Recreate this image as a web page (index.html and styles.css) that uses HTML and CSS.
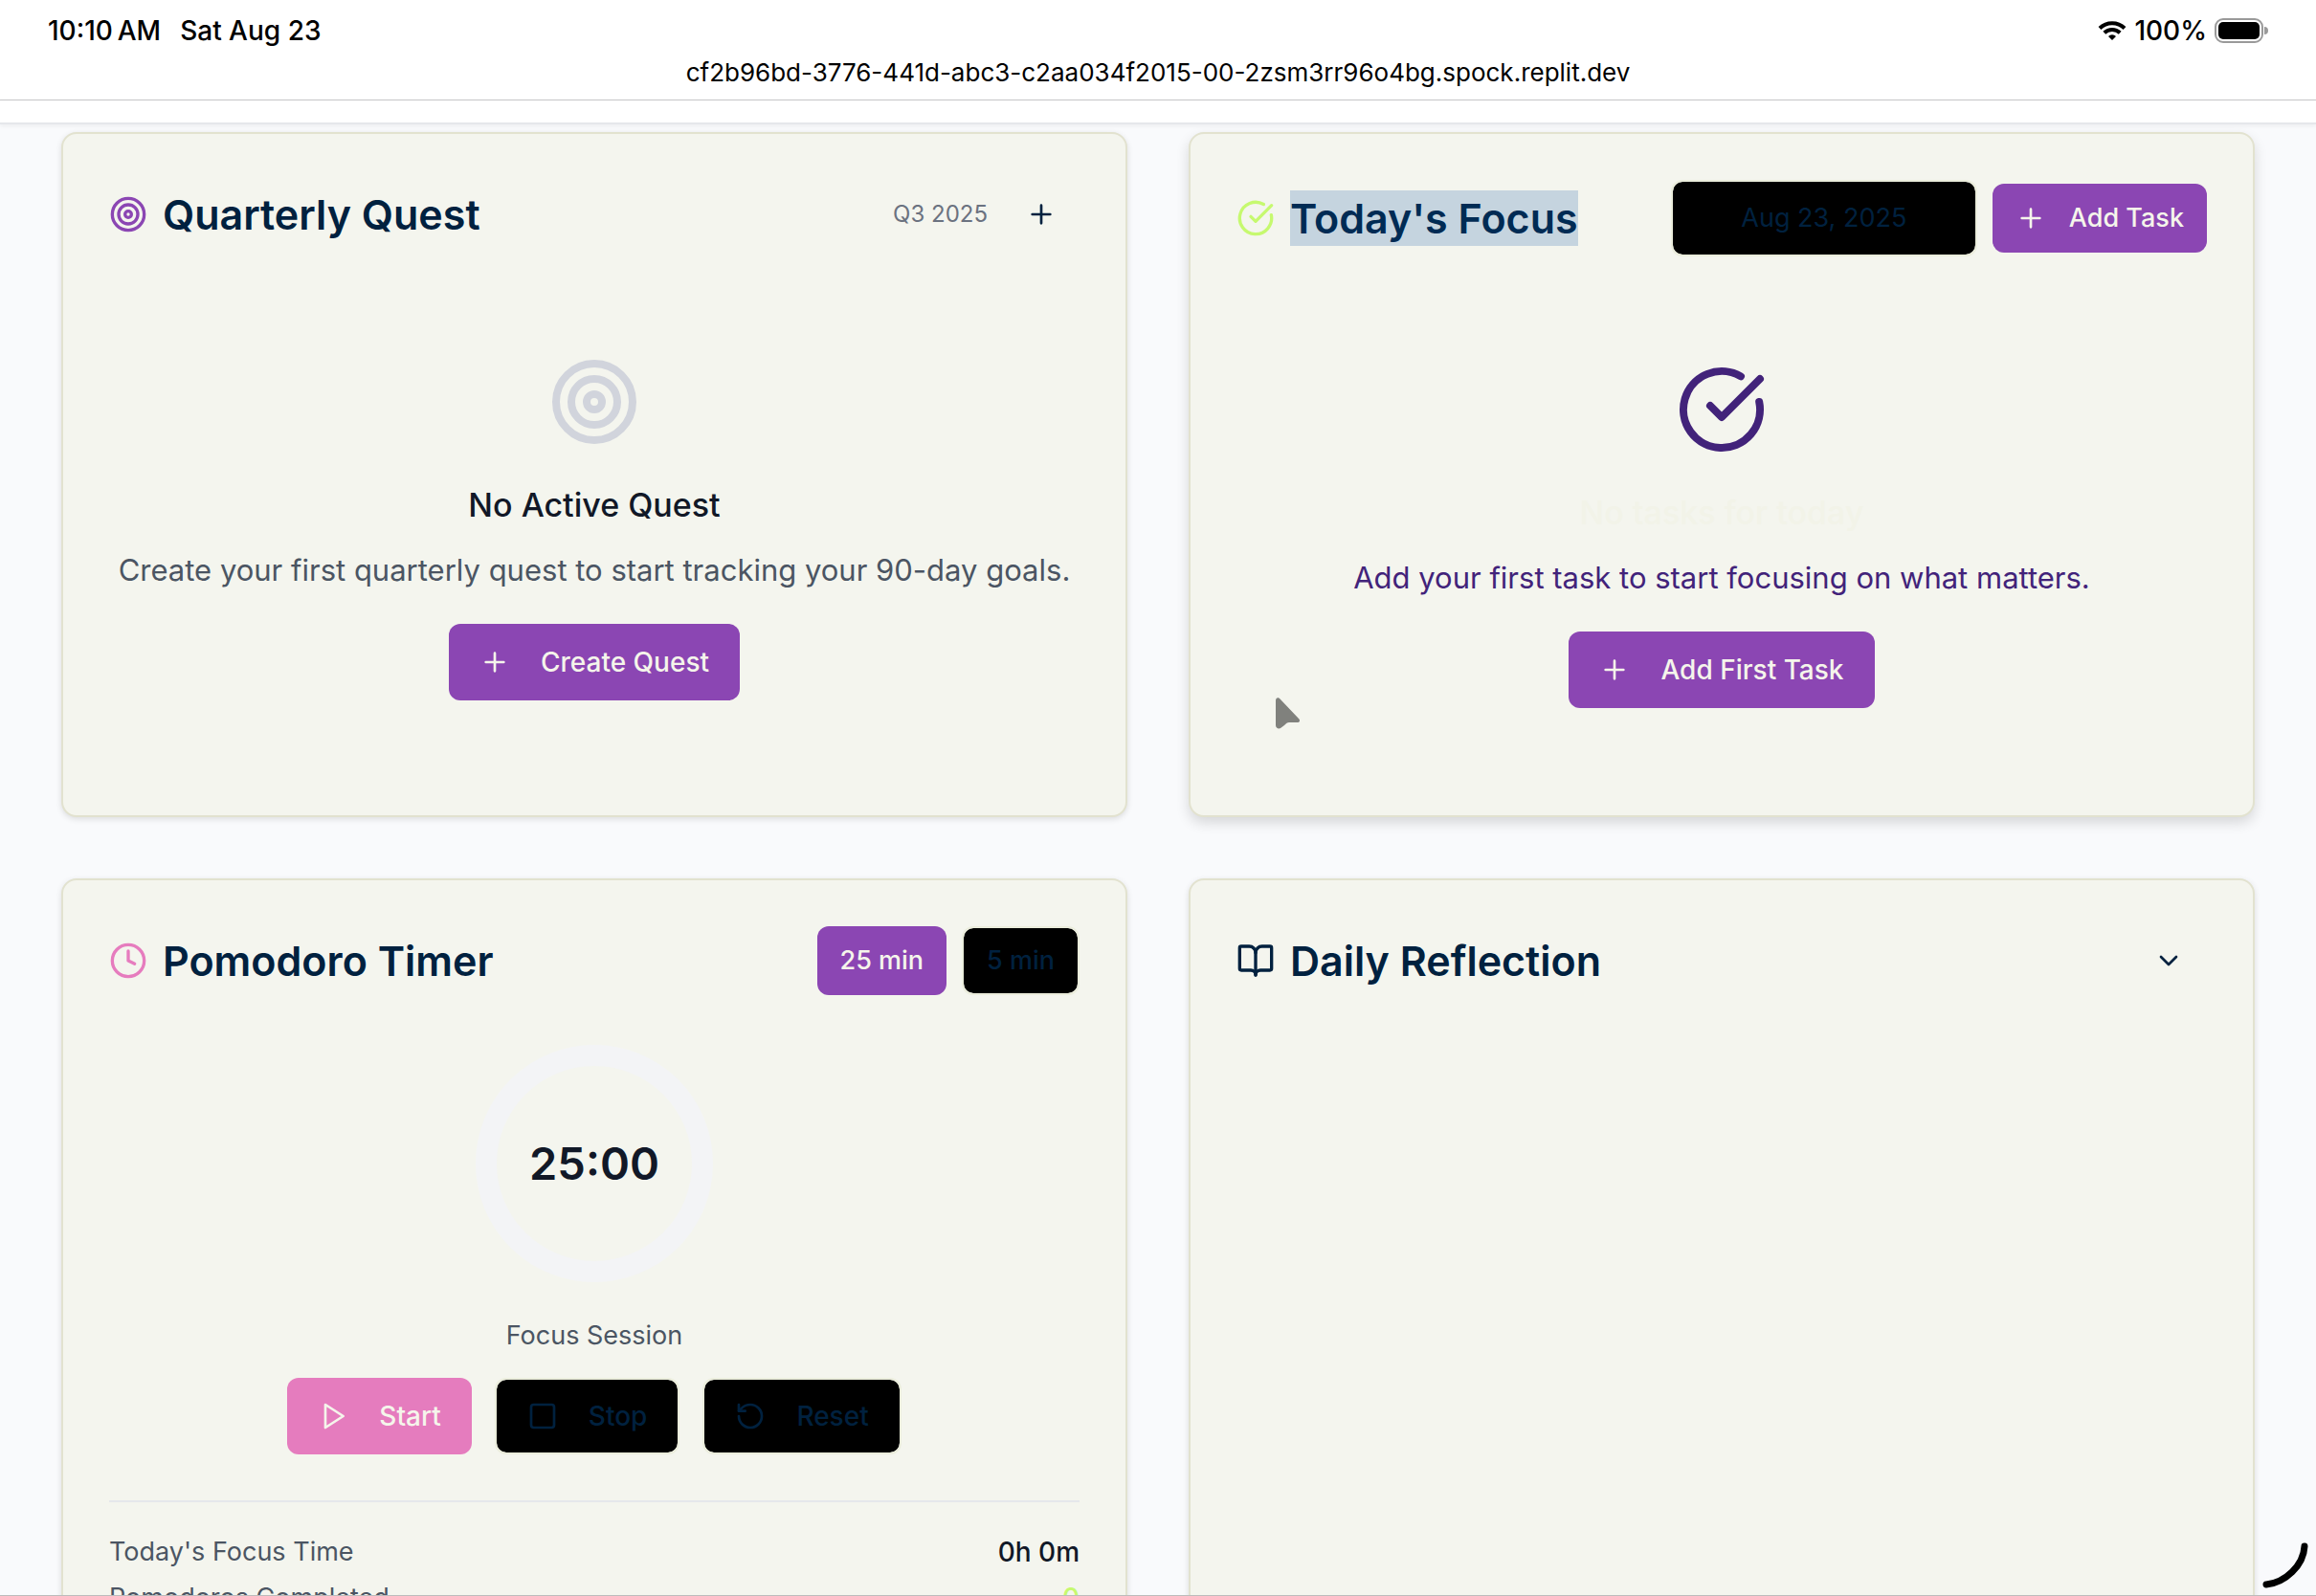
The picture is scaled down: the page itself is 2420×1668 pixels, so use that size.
FILE: index.html
```html
<!DOCTYPE html>
<html lang="en">
<head>
<meta charset="utf-8">
<meta name="viewport" content="width=device-width, initial-scale=1">
<title>Focus Dashboard</title>
<link rel="stylesheet" href="styles.css">
</head>
<body>
<svg class="sprite" aria-hidden="true">
  <symbol id="target" viewBox="0 0 24 24"><circle cx="12" cy="12" r="10"/><circle cx="12" cy="12" r="6"/><circle cx="12" cy="12" r="2"/></symbol>
  <symbol id="check" viewBox="0 0 24 24"><path d="M21.801 10A10 10 0 1 1 17 3.335"/><path d="m9 11 3 3L22 4"/></symbol>
  <symbol id="plus" viewBox="0 0 24 24"><path d="M5 12h14M12 5v14"/></symbol>
  <symbol id="clock" viewBox="0 0 24 24"><circle cx="12" cy="12" r="10"/><path d="M12 6v6l4 2"/></symbol>
  <symbol id="book" viewBox="0 0 24 24"><path d="M12 7v14"/><path d="M3 18a1 1 0 0 1-1-1V4a1 1 0 0 1 1-1h5a4 4 0 0 1 4 4 4 4 0 0 1 4-4h5a1 1 0 0 1 1 1v13a1 1 0 0 1-1 1h-6a3 3 0 0 0-3 3 3 3 0 0 0-3-3z"/></symbol>
  <symbol id="chevron" viewBox="0 0 24 24"><path d="m6 9 6 6 6-6"/></symbol>
  <symbol id="play" viewBox="0 0 24 24"><path d="m6 3 14 9-14 9z"/></symbol>
  <symbol id="square" viewBox="0 0 24 24"><rect x="3" y="3" width="18" height="18" rx="2"/></symbol>
  <symbol id="reset" viewBox="0 0 24 24"><path d="M3 12a9 9 0 1 0 9-9 9.75 9.75 0 0 0-6.74 2.74L3 8"/><path d="M3 3v5h5"/></symbol>
</svg>

<header class="device-bar">
  <div class="status">
    <div class="status-side"><span>10:10&thinsp;AM</span><span>Sat Aug 23</span></div>
    <div class="status-side status-right">
      <svg class="wifi" viewBox="0 0 30 20" aria-hidden="true"><path d="M2 7.500a18.500 18.500 0 0 1 26 0M6.800 12.300a11.700 11.700 0 0 1 16.400 0"/><path class="dot" d="M15 20l-4-4a5.600 5.600 0 0 1 8 0z"/></svg>
      <span>100%</span>
      <svg class="battery" viewBox="0 0 56 28" aria-hidden="true"><rect class="shell" x="1" y="2" width="49" height="24" rx="8"/><rect x="4" y="5" width="43" height="18" rx="5"/><path class="cap" d="M52 10a4 4 0 0 1 0 8z"/></svg>
    </div>
  </div>
  <div class="address">cf2b96bd-3776-441d-abc3-c2aa034f2015-00-2zsm3rr96o4bg.spock.replit.dev</div>
</header>
<div class="app-nav"></div>

<main class="board">
  <section class="card">
    <div class="card-head">
      <svg class="icon violet"><use href="#target"/></svg>
      <h2>Quarterly Quest</h2>
      <div class="tools">
        <span class="quarter">Q3 2025</span>
        <button class="btn small ghost" aria-label="New quest"><svg class="glyph"><use href="#plus"/></svg></button>
      </div>
    </div>
    <div class="empty">
      <svg class="big-icon silver"><use href="#target"/></svg>
      <h3>No Active Quest</h3>
      <p>Create your first quarterly quest to start tracking your 90-day goals.</p>
      <button class="btn primary"><svg class="glyph"><use href="#plus"/></svg>Create Quest</button>
    </div>
  </section>

  <section class="card raised">
    <div class="card-head">
      <svg class="icon lime"><use href="#check"/></svg>
      <h2><mark>Today's Focus</mark></h2>
      <div class="tools">
        <button class="btn outline date">Aug 23, 2025</button>
        <button class="btn small primary"><svg class="glyph"><use href="#plus"/></svg>Add Task</button>
      </div>
    </div>
    <div class="empty indigo">
      <svg class="big-icon"><use href="#check"/></svg>
      <h3 class="faint">No tasks for today</h3>
      <p>Add your first task to start focusing on what matters.</p>
      <button class="btn primary"><svg class="glyph"><use href="#plus"/></svg>Add First Task</button>
    </div>
  </section>

  <section class="card">
    <div class="card-head">
      <svg class="icon pink-line"><use href="#clock"/></svg>
      <h2>Pomodoro Timer</h2>
      <div class="tools">
        <button class="btn small primary">25 min</button>
        <button class="btn small outline">5 min</button>
      </div>
    </div>
    <div class="timer">
      <div class="dial">
        <svg viewBox="0 0 256 256" aria-hidden="true"><circle cx="128" cy="128" r="113"/></svg>
        <span>25:00</span>
      </div>
      <div class="session">Focus Session</div>
      <div class="controls">
        <button class="btn pink"><svg class="glyph"><use href="#play"/></svg>Start</button>
        <button class="btn outline"><svg class="glyph"><use href="#square"/></svg>Stop</button>
        <button class="btn outline"><svg class="glyph"><use href="#reset"/></svg>Reset</button>
      </div>
    </div>
    <dl class="stats">
      <div><dt>Today's Focus Time</dt><dd>0h 0m</dd></div>
      <div><dt>Pomodoros Completed</dt><dd class="lime">0</dd></div>
    </dl>
  </section>

  <section class="card">
    <div class="card-head">
      <svg class="icon"><use href="#book"/></svg>
      <h2>Daily Reflection</h2>
      <div class="tools">
        <button class="btn small ghost" aria-label="Expand reflection"><svg class="glyph"><use href="#chevron"/></svg></button>
      </div>
    </div>
  </section>
</main>

<svg class="pointer" viewBox="0 0 26 34" aria-hidden="true"><path d="M1 4C1 1 4 0 6 3L25 23C27 25 26 27 23 27H15C13 27 12 28 10 30L6 33C4 34 1 33 1 30Z"/></svg>
<svg class="corner" viewBox="0 0 48 48" aria-hidden="true"><path d="M44 4C43 24 24 42 4 44"/></svg>
</body>
</html>
```
FILE: styles.css
```css
* { box-sizing: border-box; }

body {
  margin: 0;
  height: 100vh;
  overflow: hidden;
  position: relative;
  background: #f9fafc;
  color: #00213f;
  font-family: Inter, "Liberation Sans", sans-serif;
  font-size: 27px;
  line-height: 40px;
}

body::after {
  content: "";
  position: absolute;
  inset: auto 0 0;
  height: 1px;
  background: #bcbcbc;
}

h2, h3, p, dl, dd { margin: 0; }

.sprite { position: absolute; width: 0; height: 0; }

svg { flex: none; fill: none; stroke: currentColor; stroke-width: 2; stroke-linecap: round; stroke-linejoin: round; }

/* Device chrome */
.device-bar {
  background: #fff;
  color: #000;
  border-bottom: 1px solid #c6c6c8;
  padding: 12px 50px 8px;
}
.status { display: flex; justify-content: space-between; font-size: 28px; font-weight: 500; }
.status-side { display: flex; align-items: center; gap: 20px; }
.status-right { gap: 8px; }
.wifi { width: 30px; height: 20px; stroke-width: 4; stroke-linecap: butt; }
.wifi .dot { fill: currentColor; stroke: none; }
.battery { width: 56px; height: 28px; fill: #000; stroke: none; }
.battery .shell { fill: none; stroke: #9a9a9a; }
.battery .cap { fill: #9a9a9a; }
.address { margin-top: 4px; text-align: center; font-size: 26px; line-height: 40px; }

.app-nav {
  height: 25px;
  background: #fff;
  border-bottom: 2px solid #e5e7eb;
  box-shadow: 0 2px 4px rgba(0, 0, 0, .05);
}

/* Cards */
.board { display: grid; grid-template-columns: 1fr 1fr; gap: 64px; padding: 8px 64px; }

.card {
  padding: 48px;
  background: #f4f5ee;
  border: 2px solid #e2e2cf;
  border-radius: 16px;
  box-shadow: 0 2px 6px rgba(0, 0, 0, .12);
}
.card.raised { box-shadow: 0 6px 14px rgba(0, 0, 0, .14); }

.card-head { display: flex; align-items: center; gap: 16px; min-height: 72px; margin-bottom: 48px; }
.tools { display: flex; align-items: center; gap: 16px; margin-left: auto; }

h2 { font-size: 43px; line-height: 58px; font-weight: 600; }
mark { display: block; background: #c5d4df; color: #002b54; }

.icon { width: 40px; height: 40px; }
.big-icon { width: 96px; height: 96px; }
.glyph { width: 32px; height: 32px; }
.violet { color: #8b46b3; }
.lime { color: #c6f96f; }
.pink-line { color: #e67cbe; }
.silver { color: #d1d4dc; }
.quarter { color: #6b7280; font-size: 24px; }

/* Buttons */
.btn {
  display: inline-flex;
  align-items: center;
  justify-content: center;
  gap: 32px;
  height: 80px;
  padding: 0 32px;
  border: 0;
  border-radius: 12px;
  background: none;
  color: inherit;
  font: 500 28px/40px Inter, "Liberation Sans", sans-serif;
  white-space: nowrap;
}
.btn.small { height: 72px; padding: 0 24px; gap: 24px; font-size: 27px; }
.btn.primary { background: #8b46b3; color: #f5f5eb; }
.btn.pink { background: #e57cbe; color: #f5f5eb; }
.btn.outline { background: #000; background-clip: padding-box; border: 2px solid #ebeddc; color: #00213f; }
.btn.date { width: 320px; font-size: 27px; font-weight: 400; }

/* Empty states */
.empty { display: flex; flex-direction: column; align-items: center; padding: 64px 0; text-align: center; }
.empty h3 { margin-top: 32px; font-size: 34px; line-height: 56px; font-weight: 500; color: #111827; }
.empty p { margin: 16px 0 32px; font-size: 31px; line-height: 48px; color: #4b5563; }
.empty.indigo, .empty.indigo p { color: #42237a; }
.empty .faint { color: #f2f3e8; }

/* Timer */
.timer { display: flex; flex-direction: column; align-items: center; }
.dial { display: grid; place-items: center; }
.dial > * { grid-area: 1 / 1; }
.dial svg { width: 256px; height: 256px; stroke: #f3f4f6; stroke-width: 22; }
.dial span { font-size: 47px; line-height: 56px; font-weight: 600; color: #111827; }
.session { margin: 32px 0 24px; color: #4b5563; }
.controls { display: flex; gap: 24px; }
.stats { display: grid; gap: 8px; margin-top: 48px; padding-top: 32px; border-top: 2px solid #e5e7eb; }
.stats div { display: flex; justify-content: space-between; }
.stats dt { color: #4b5563; }
.stats dd { font-size: 28px; font-weight: 500; color: #111827; }
.stats dd.lime { color: #c6f96f; }

/* Overlays */
.pointer { position: absolute; left: 1332px; top: 728px; width: 26px; height: 34px; fill: #80817d; stroke: none; }
.corner { position: absolute; right: 8px; bottom: 8px; width: 48px; height: 48px; color: #000; stroke-width: 7; }
```
